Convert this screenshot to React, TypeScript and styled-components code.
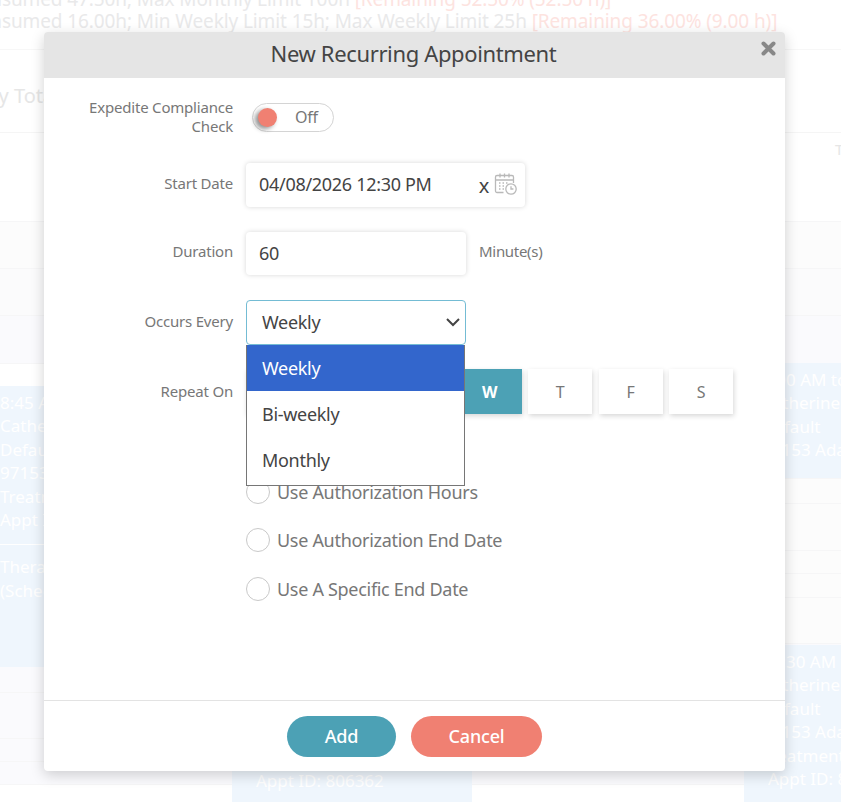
import React from 'react'
import styled, { createGlobalStyle } from 'styled-components'

const GlobalStyle = createGlobalStyle`
  html, body {
    margin: 0;
    padding: 0;
    width: 841px;
    height: 802px;
    overflow: hidden;
    background: #fff;
    font-family: "Noto Sans", "Open Sans", sans-serif;
  }
  * {
    box-sizing: border-box;
  }
`

const Page = styled.div`
  position: relative;
  width: 841px;
  height: 802px;
  overflow: hidden;
`

const Summary = styled.div`
  height: 61px;
  margin-top: -12px;
  margin-left: -33px;
  white-space: nowrap;
  font-size: 19px;
  letter-spacing: -0.1px;
  line-height: 22px;
  color: #e9e9ea;
`

const Remaining = styled.span`
  color: #fde3df;
`

const TotalsBar = styled.div`
  height: 84px;
  margin-left: -58px;
  padding-top: 33px;
  border-top: 1px solid #f7f7f7;
  border-bottom: 1px solid #f5f5f5;
  font-size: 20px;
  line-height: 26px;
  color: #e6e6e6;
  white-space: nowrap;
`

const Band = styled.div<{ $h: number; $bg: string }>`
  height: ${({ $h }) => $h}px;
  background: ${({ $bg }) => $bg};
  border-bottom: 1px solid #f6f6f7;
`

const ColumnHead = styled.div`
  padding: 6px 0 0 835px;
  font-size: 15px;
  color: #e6e6e6;
`

const Appointment = styled.div<{ $left: number; $top: number; $width: number; $height: number; $pad: number }>`
  position: absolute;
  left: ${({ $left }) => $left}px;
  top: ${({ $top }) => $top}px;
  width: ${({ $width }) => $width}px;
  height: ${({ $height }) => $height}px;
  padding: 5px 0 0 ${({ $pad }) => $pad}px;
  background: #eff6fd;
  color: #fff;
  font-size: 17px;
  line-height: 23.4px;
  white-space: nowrap;
  overflow: hidden;
`

const AppointmentRule = styled.hr`
  margin: 13px 0 10px;
  border: 0;
  border-top: 1px solid #fff;
`

const AppointmentId = styled.span`
  margin-left: 6px;
`

const Modal = styled.div`
  position: absolute;
  left: 44px;
  top: 32px;
  width: 741px;
  height: 739px;
  display: flex;
  flex-direction: column;
  background: #fff;
  border-radius: 4px;
  box-shadow: 0 4px 14px rgba(0, 0, 0, 0.18);
  letter-spacing: -0.3px;
`

const ModalHeader = styled.div`
  position: relative;
  flex: 0 0 46px;
  display: flex;
  align-items: center;
  justify-content: center;
  padding: 0 2px 5px 0;
  background: #e5e5e5;
  border-radius: 4px 4px 0 0;
  font-size: 22px;
  letter-spacing: -0.36px;
  color: #444;
`

const CloseButton = styled.span`
  position: absolute;
  right: 9px;
  top: 9px;
  display: flex;
  color: #888;
`

const ModalBody = styled.div`
  flex: 1;
  display: flex;
  flex-direction: column;
  gap: 25px;
  padding-top: 20px;
`

const Row = styled.div<{ $mt?: number }>`
  display: flex;
  align-items: center;
  gap: 13px;
  margin-top: ${({ $mt }) => $mt ?? 0}px;
`

const Label = styled.div<{ $lift?: number }>`
  flex: 0 0 189px;
  padding-bottom: ${({ $lift }) => $lift ?? 0}px;
  text-align: right;
  font-size: 15px;
  letter-spacing: -0.2px;
  line-height: 19px;
  color: #777;
`

const Toggle = styled.div`
  position: relative;
  width: 82px;
  height: 29px;
  margin-left: 6px;
  padding: 3px 0 0 42px;
  border: 1px solid #d4d4d4;
  border-radius: 15px;
  font-size: 16px;
  line-height: 21px;
  color: #777;
`

const ToggleKnob = styled.span`
  position: absolute;
  left: 5px;
  top: 4px;
  width: 19px;
  height: 19px;
  border-radius: 50%;
  background: #f08072;
  box-shadow: -3px 2px 5px rgba(0, 0, 0, 0.45);
`

const Field = styled.div<{ $width: number; $height: number }>`
  display: flex;
  align-items: center;
  width: ${({ $width }) => $width}px;
  height: ${({ $height }) => $height}px;
  padding: 0 7px 2px 13px;
  background: #fff;
  border-radius: 4px;
  box-shadow: 0 0 5px rgba(0, 0, 0, 0.16);
  font-size: 18px;
  color: #444;
`

const FieldValue = styled.span`
  flex: 1;
`

const ClearMark = styled.span`
  margin: 3px 5px 0 0;
  font-size: 20px;
`

const Unit = styled.span`
  padding-bottom: 5px;
  font-size: 15px;
  color: #777;
`

const SelectWrap = styled.div`
  position: relative;
  width: 220px;
  height: 45px;
`

const SelectBox = styled.div`
  display: flex;
  align-items: center;
  justify-content: space-between;
  height: 100%;
  padding: 0 2px 2px 15px;
  border: 1px solid #74bcd4;
  border-radius: 4px;
  font-size: 18px;
  color: #444;
`

const Dropdown = styled.div`
  position: absolute;
  z-index: 2;
  left: 0;
  top: 100%;
  width: 219px;
  padding-bottom: 2px;
  background: #fff;
  border: 1px solid #767676;
  border-top: 0;
`

const Option = styled.div<{ $selected?: boolean }>`
  height: 46px;
  padding-left: 15px;
  font-size: 18px;
  line-height: 46px;
  color: ${({ $selected }) => ($selected ? '#fff' : '#444')};
  background: ${({ $selected }) => ($selected ? '#3366cc' : '#fff')};
`

const Days = styled.div`
  display: flex;
  gap: 6.5px;
`

const Day = styled.div<{ $active?: boolean }>`
  width: 64px;
  height: 45px;
  display: flex;
  align-items: center;
  justify-content: center;
  font-size: 16px;
  font-weight: ${({ $active }) => ($active ? 700 : 400)};
  color: ${({ $active }) => ($active ? '#fff' : '#777')};
  background: ${({ $active }) => ($active ? '#4ca1b5' : '#fff')};
  box-shadow: 1px 2px 5px rgba(0, 0, 0, 0.16);
`

const RadioList = styled.div`
  display: flex;
  flex-direction: column;
  gap: 23.5px;
  margin: 40px 0 0 202px;
`

const RadioRow = styled.div`
  display: flex;
  align-items: center;
  gap: 7px;
  height: 25px;
  font-size: 18px;
  color: #777;
`

const RadioMark = styled.span`
  width: 24px;
  height: 24px;
  border: 1px solid #c9c9c9;
  border-radius: 50%;
`

const ModalFooter = styled.div`
  flex: 0 0 71px;
  display: flex;
  justify-content: center;
  align-items: flex-start;
  gap: 15px;
  padding-top: 15px;
  border-top: 1px solid #e3e3e3;
`

const ActionButton = styled.button<{ $width: number; $bg: string }>`
  width: ${({ $width }) => $width}px;
  height: 41px;
  padding: 0 0 2px;
  border: 0;
  border-radius: 21px;
  background: ${({ $bg }) => $bg};
  color: #fff;
  font-family: inherit;
  font-size: 18px;
  font-weight: 500;
  letter-spacing: -0.2px;
`

const days = ['S', 'M', 'T', 'W', 'T', 'F', 'S']

const CalendarClockIcon = () => (
  <svg width="24" height="24" viewBox="0 0 24 24" fill="none" stroke="#b9b9b9" strokeWidth="1.3">
    <path d="M9.5 20.5H3a1.5 1.5 0 0 1-1.5-1.5V5A1.5 1.5 0 0 1 3 3.5h15A1.5 1.5 0 0 1 19.5 5v6" />
    <path d="M6 1.5v4M10.5 1.5v4M15 1.5v4M1.5 8h18" />
    <path d="M5 11h1.5M8.5 11H10M12 11h1.5M5 14h1.5M8.5 14H10M5 17h1.5M8.5 17H10" />
    <circle cx="17" cy="17" r="5.2" />
    <path d="M17 14.2V17h2.4" />
  </svg>
)

const CloseIcon = () => (
  <svg width="15" height="15" viewBox="0 0 15 15" fill="none" stroke="currentColor" strokeWidth="4" strokeLinecap="round">
    <path d="M2.5 2.5l10 10M12.5 2.5l-10 10" />
  </svg>
)

const ChevronIcon = () => (
  <svg width="20" height="20" viewBox="0 0 20 20" fill="none" stroke="#444" strokeWidth="2">
    <path d="M4 7l6 6 6-6" />
  </svg>
)

export default function App() {
  return (
    <Page>
      <GlobalStyle />
      <Summary>
        <div>
          Consumed 47.50h; Max Monthly Limit 100h <Remaining>[Remaining 52.50% (52.50 h)]</Remaining>
        </div>
        <div>
          Consumed 16.00h; Min Weekly Limit 15h; Max Weekly Limit 25h <Remaining>[Remaining 36.00% (9.00 h)]</Remaining>
        </div>
      </Summary>
      <TotalsBar>Weekly Total</TotalsBar>
      <Band $h={89} $bg="#fff">
        <ColumnHead>T</ColumnHead>
      </Band>
      <Band $h={47} $bg="#fcfcfc" />
      <Band $h={47} $bg="#fbfbfc" />
      <Band $h={48} $bg="#fafafd" />
      <Band $h={115} $bg="#fff" />
      <Band $h={25} $bg="#fcfcfc" />
      <Band $h={47} $bg="#fcfcfc" />
      <Band $h={23} $bg="#fcfcfc" />
      <Band $h={24} $bg="#fcfcfc" />
      <Band $h={46} $bg="#fcfcfc" />
      <Band $h={49} $bg="#fafafd" />
      <Band $h={46} $bg="#fafafd" />
      <Band $h={23} $bg="#fafafd" />
      <Band $h={23} $bg="#fafafd" />

      <Appointment $left={-24} $top={386} $width={180} $height={281} $pad={24}>
        8:45 AM to
        <br />
        Catherine
        <br />
        Default
        <br />
        97153 Adaptive
        <br />
        Treatment
        <br />
        Appt ID
        <AppointmentRule />
        Therapist
        <br />
        (Scheduled)
      </Appointment>
      <Appointment $left={744} $top={363} $width={97} $height={115} $pad={18}>
        9:00 AM to
        <br />
        Catherine
        <br />
        Default
        <br />
        97153 Adaptive
      </Appointment>
      <Appointment $left={744} $top={645} $width={97} $height={157} $pad={18}>
        10:30 AM to
        <br />
        Catherine
        <br />
        Default
        <br />
        97153 Adaptive
        <br />
        Treatment
        <br />
        <AppointmentId>Appt ID: 8</AppointmentId>
      </Appointment>
      <Appointment $left={232} $top={741} $width={240} $height={61} $pad={24}>
        <br />
        Appt ID: 806362
      </Appointment>

      <Modal>
        <ModalHeader>
          New Recurring Appointment
          <CloseButton>
            <CloseIcon />
          </CloseButton>
        </ModalHeader>
        <ModalBody>
          <Row>
            <Label>Expedite Compliance Check</Label>
            <Toggle>
              <ToggleKnob />
              Off
            </Toggle>
          </Row>
          <Row $mt={2}>
            <Label $lift={4}>Start Date</Label>
            <Field $width={279} $height={44}>
              <FieldValue>04/08/2026 12:30 PM</FieldValue>
              <ClearMark>x</ClearMark>
              <CalendarClockIcon />
            </Field>
          </Row>
          <Row>
            <Label $lift={4}>Duration</Label>
            <Field $width={220} $height={43}>
              <FieldValue>60</FieldValue>
            </Field>
            <Unit>Minute(s)</Unit>
          </Row>
          <Row>
            <Label $lift={2}>Occurs Every</Label>
            <SelectWrap>
              <SelectBox>
                Weekly
                <ChevronIcon />
              </SelectBox>
              <Dropdown>
                <Option $selected>Weekly</Option>
                <Option>Bi-weekly</Option>
                <Option>Monthly</Option>
              </Dropdown>
            </SelectWrap>
          </Row>
          <Row $mt={-1}>
            <Label>Repeat On</Label>
            <Days>
              {days.map((day, i) => (
                <Day key={i} $active={i === 3}>
                  {day}
                </Day>
              ))}
            </Days>
          </Row>
          <RadioList>
            <RadioRow>
              <RadioMark />
              Use Authorization Hours
            </RadioRow>
            <RadioRow>
              <RadioMark />
              Use Authorization End Date
            </RadioRow>
            <RadioRow>
              <RadioMark />
              Use A Specific End Date
            </RadioRow>
          </RadioList>
        </ModalBody>
        <ModalFooter>
          <ActionButton $width={109} $bg="#4ca1b5">
            Add
          </ActionButton>
          <ActionButton $width={131} $bg="#f08072">
            Cancel
          </ActionButton>
        </ModalFooter>
      </Modal>
    </Page>
  )
}
